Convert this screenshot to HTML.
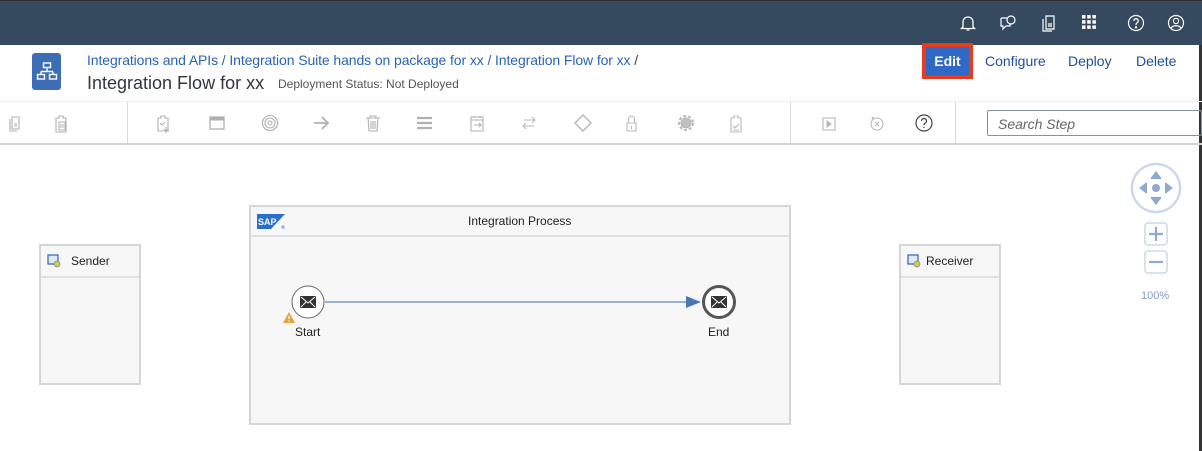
<!DOCTYPE html>
<html><head><meta charset="utf-8"><style>
*{margin:0;padding:0;box-sizing:border-box}
body{width:1202px;height:451px;overflow:hidden;background:#fff;font-family:"Liberation Sans",sans-serif;position:relative}
.a{position:absolute}
.top{left:0;top:0;width:1202px;height:45px;background:#354a5f;border-top:1px solid #2c2c2c}
.ic{position:absolute;top:14px}
.bc{left:87px;top:52px;font-size:14px;color:#2a63b8;white-space:nowrap;letter-spacing:-0.1px}
.title{left:87px;top:73px;font-size:18px;color:#32363a}
.st{left:278px;top:77px;font-size:12px;color:#555}
.act{top:53px;font-size:14px;color:#1d4f9c}
.tb{left:0;top:101px;width:1202px;height:44px;border-bottom:2px solid #d4d4d4;border-top:1px solid #f0f0f0}
.div{top:102px;width:1px;height:42px;background:#d9d9d9}
.t{position:absolute;top:113px}
.box{border:2px solid #d6d6d6;background:#f7f7f7}
.lbl{font-size:12px;color:#222}
</style></head><body>
<div class="a top"></div>
<svg class="ic" style="left:959px" width="18" height="18" viewBox="0 0 18 18" fill="none" stroke="#fff" stroke-width="1.3"><path d="M4 13V8a5 5 0 0 1 10 0v5l1.5 1.5h-13z M7.5 16h3"/></svg>
<svg class="ic" style="left:999px" width="18" height="18" viewBox="0 0 18 18" fill="none" stroke="#fff" stroke-width="1.2"><path d="M2 4h6M2 4v8h2v3l3-3h4v-2"/><circle cx="12" cy="6" r="4"/></svg>
<svg class="ic" style="left:1040px" width="18" height="18" viewBox="0 0 18 18" fill="none" stroke="#fff" stroke-width="1.2"><path d="M6 2h8v13H6z M3 5v12h9 M8 10h4M8 12h4"/></svg>
<svg class="ic" style="left:1081px" width="16" height="16" viewBox="0 0 16 16" fill="#fff"><rect x="1" y="1" width="3.5" height="3.5"/><rect x="6.2" y="1" width="3.5" height="3.5"/><rect x="11.4" y="1" width="3.5" height="3.5"/><rect x="1" y="6.2" width="3.5" height="3.5"/><rect x="6.2" y="6.2" width="3.5" height="3.5"/><rect x="11.4" y="6.2" width="3.5" height="3.5"/><rect x="1" y="11.4" width="3.5" height="3.5"/><rect x="6.2" y="11.4" width="3.5" height="3.5"/><rect x="11.4" y="11.4" width="3.5" height="3.5"/></svg>
<svg class="ic" style="left:1127px" width="18" height="18" viewBox="0 0 18 18" fill="none" stroke="#fff" stroke-width="1.2"><circle cx="9" cy="9" r="7.5"/><path d="M6.8 7a2.2 2.2 0 1 1 3 2c-.8.4-.8 1-.8 2"/><circle cx="9" cy="13.3" r=".6" fill="#fff"/></svg>
<svg class="ic" style="left:1167px" width="18" height="18" viewBox="0 0 18 18" fill="none" stroke="#fff" stroke-width="1.2"><circle cx="9" cy="9" r="7.5"/><circle cx="9" cy="7" r="2.6"/><path d="M4 14c2-3 8-3 10 0"/></svg>
<div class="a" style="left:1199px;top:45px;width:3px;height:406px;background:#333"></div>

<div class="a" style="left:32px;top:53px;width:29px;height:37px;background:#3d6db5;border-radius:3px"></div>
<svg class="a" style="left:36px;top:60px" width="22" height="22" viewBox="0 0 22 22" fill="none" stroke="#fff" stroke-width="1.4"><rect x="7.5" y="3" width="7" height="4.5"/><path d="M11 7.5v4M5 11.5h12M5 11.5v3M17 11.5v3"/><rect x="1.5" y="14.5" width="7" height="4.5"/><rect x="13.5" y="14.5" width="7" height="4.5"/></svg>
<div class="a bc">Integrations and APIs / Integration Suite hands on package for xx / Integration Flow for xx <span style="color:#444">/</span></div>
<div class="a title">Integration Flow for xx</div>
<div class="a st">Deployment Status: Not Deployed</div>
<div class="a" style="left:922px;top:43px;width:51px;height:36px;background:#e53b1f"></div>
<div class="a" style="left:926px;top:47px;width:43px;height:28px;background:#3068c6;color:#fff;font-weight:bold;font-size:14px;text-align:center;line-height:28px">Edit</div>
<div class="a act" style="left:985px">Configure</div>
<div class="a act" style="left:1068px">Deploy</div>
<div class="a act" style="left:1136px">Delete</div>

<div class="a tb"></div>
<div class="a div" style="left:127px"></div>
<div class="a div" style="left:790px"></div>
<div class="a div" style="left:955px"></div>
<svg class="t" style="left:6px" width="500" height="20" viewBox="0 0 500 20" fill="none" stroke="#b0b0b0" stroke-width="1.1">
<path d="M6 4h7v12H6zM4 6v12h7M8 11h3M8 13h3"/>
<path d="M50 5h3v-2h4v2h3v14H50zM53 9h6v8h-6zM54 12h4M54 14h4"/>
<path d="M152 5h3v-2h4v2h3v13h-4M152 5v13h5M154 10l2 2 3-3M160 14v6M157 17h6"/>
<rect x="204" y="4" width="14" height="12" stroke-width="1.3"/><path d="M204 6h14" stroke-width="3"/>
<circle cx="264" cy="10" r="7.5"/><circle cx="264" cy="10" r="5"/><circle cx="264" cy="10" r="2"/>
<path d="M308 10h14M316 4l6 6-6 6" stroke-width="1.8"/>
<path d="M360 5h14M364 5v-2h6v2M362 5l1 13h8l1-13M365 8v8M367 8v8M369 8v8"/>
<path d="M411 5h15M411 10h15M411 15h15" stroke-width="2.2"/>
<path d="M465 4h12v14h-12zM465 7h12M468 3v2M474 3v2M468 12h7M473 10l2 2-2 2"/>
</svg>
<svg class="t" style="left:516px" width="420" height="20" viewBox="0 0 420 20" fill="none" stroke="#b8b8b8" stroke-width="1.1">
<path d="M8 7h11M16 4l3 3-3 3M18 13H7M10 10l-3 3 3 3"/>
<path d="M67 2l8 8-8 8-8-8z" stroke-width="1.5"/>
<path d="M111 10h9v8h-9zM112.5 10V6a3 3 0 0 1 6 0v4M115.5 13v3"/>
<circle cx="170" cy="10" r="5" fill="#c0c0c0"/><circle cx="170" cy="10" r="7" stroke-dasharray="3 2" stroke-width="2"/>
<path d="M215 5h3v-2h4v2h3v14h-10zM217 13l2 2 4-4M217 17h6"/>
<rect x="307" y="5" width="12" height="12"/><path d="M311 8v6l4-3z" fill="#b8b8b8"/>
<circle cx="361" cy="11" r="6"/><path d="M359 9l4 4M363 9l-4 4M358 4l-2 1 2 2"/>
<circle cx="408" cy="10" r="8" stroke="#444" stroke-width="1.2"/><path d="M405.5 8a2.5 2.5 0 1 1 3.5 2.3c-.8.4-1 1-1 2" stroke="#444" stroke-width="1.2"/><circle cx="408" cy="14.5" r=".7" fill="#444" stroke="none"/>
</svg>
<div class="a" style="left:987px;top:110px;width:215px;height:26px;border:1px solid #89919a;border-radius:2px;font-style:italic;font-size:14px;color:#666;padding:5px 10px">Search Step</div>

<div class="a box" style="left:249px;top:205px;width:542px;height:220px"></div>
<div class="a" style="left:251px;top:235px;width:538px;height:2px;background:#e0e0e0"></div>
<div class="a lbl" style="left:468px;top:214px">Integration Process</div>
<svg class="a" style="left:257px;top:214px" width="29" height="16" viewBox="0 0 29 16"><path d="M0 0h28L14 15H0z" fill="#2a6fc9"/><text x="1" y="11" font-size="9" font-weight="bold" fill="#fff" font-family="Liberation Sans">SAP</text><circle cx="26" cy="13" r="1.8" fill="#9bb8e0"/></svg>

<div class="a box" style="left:39px;top:244px;width:102px;height:141px"></div>
<div class="a" style="left:41px;top:276px;width:98px;height:2px;background:#e0e0e0"></div>
<div class="a box" style="left:899px;top:244px;width:102px;height:141px"></div>
<div class="a" style="left:901px;top:276px;width:98px;height:2px;background:#e0e0e0"></div>
<svg class="a" style="left:47px;top:254px" width="14" height="14" viewBox="0 0 14 14"><rect x="1" y="1" width="10" height="9" fill="#dfe8f5" stroke="#3d6db5" stroke-width="1.3"/><circle cx="10" cy="10" r="3" fill="#c9d34a" stroke="#888" stroke-width=".8"/></svg>
<div class="a lbl" style="left:71px;top:254px">Sender</div>
<svg class="a" style="left:907px;top:254px" width="14" height="14" viewBox="0 0 14 14"><rect x="1" y="1" width="10" height="9" fill="#dfe8f5" stroke="#3d6db5" stroke-width="1.3"/><circle cx="10" cy="10" r="3" fill="#c9d34a" stroke="#888" stroke-width=".8"/></svg>
<div class="a lbl" style="left:926px;top:254px">Receiver</div>

<svg class="a" style="left:270px;top:280px" width="480" height="65" viewBox="270 280 480 65">
<line x1="325" y1="302" x2="692" y2="302" stroke="#7d9cc8" stroke-width="1.5"/>
<path d="M686 296l15 6-15 6z" fill="#4a78b5"/>
<circle cx="308" cy="302" r="16" fill="#fff" stroke="#666" stroke-width="1"/>
<rect x="300" y="296" width="16" height="12" rx="1" fill="#333"/><path d="M301 297l7 6 7-6M301 307l5-5M315 307l-5-5" stroke="#fff" stroke-width="1" fill="none"/>
<path d="M289 312l6 11h-12z" fill="#e9a23b"/><path d="M289 316v3" stroke="#fff" stroke-width="1.3"/><circle cx="289" cy="321" r=".7" fill="#fff"/>
<circle cx="719" cy="302" r="15.5" fill="#fff" stroke="#555" stroke-width="3"/>
<rect x="711" y="296" width="16" height="12" rx="1" fill="#333"/><path d="M712 297l7 6 7-6M712 307l5-5M726 307l-5-5" stroke="#fff" stroke-width="1" fill="none"/>
</svg>
<div class="a lbl" style="left:295px;top:325px">Start</div>
<div class="a lbl" style="left:708px;top:325px">End</div>

<svg class="a" style="left:1128px;top:162px" width="56" height="120" viewBox="0 0 56 120">
<circle cx="28" cy="26" r="24" fill="#fff" stroke="#ccd8ea" stroke-width="2.5"/>
<path d="M28 9l6 8h-12zM28 43l6-8h-12zM11 26l8-6v12zM45 26l-8-6v12z" fill="#8fa9d2"/><circle cx="28" cy="26" r="4" fill="#8fa9d2"/>
<rect x="17" y="61" width="22" height="22" rx="3" fill="#fff" stroke="#ccd8ea" stroke-width="1.5"/><path d="M21 72h14M28 65v14" stroke="#8fa9d2" stroke-width="2.2"/>
<rect x="17" y="89" width="22" height="22" rx="3" fill="#fff" stroke="#ccd8ea" stroke-width="1.5"/><path d="M21 100h14" stroke="#8fa9d2" stroke-width="2.2"/>
</svg>
<div class="a" style="left:1141px;top:290px;font-size:11px;color:#7f9ccb">100%</div>
</body></html>
